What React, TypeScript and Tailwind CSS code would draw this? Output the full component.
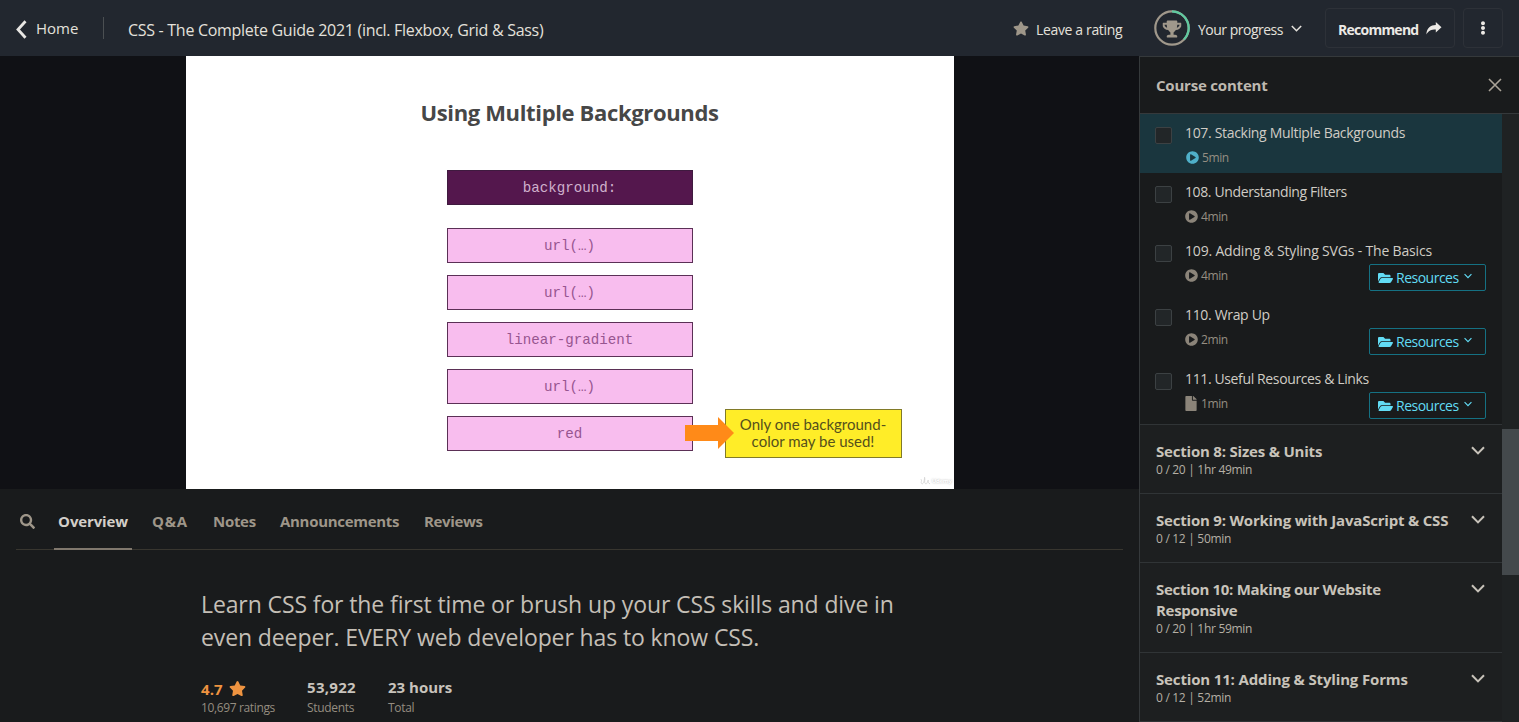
import React from "react";
import { FaStar, FaTrophy, FaEllipsisV, FaFolderOpen, FaFile, FaPlayCircle, FaSearch } from "react-icons/fa";

type Lecture = { title: string; time: string; track: string; active?: boolean; file?: boolean; resources?: boolean };

const lectures: Lecture[] = [
  { title: "107. Stacking Multiple Backgrounds", time: "5min", track: "tracking-[-0.32px]", active: true },
  { title: "108. Understanding Filters", time: "4min", track: "tracking-[-0.38px]" },
  { title: "109. Adding & Styling SVGs - The Basics", time: "4min", track: "tracking-[-0.18px]", resources: true },
  { title: "110. Wrap Up", time: "2min", track: "tracking-[-0.33px]", resources: true },
  { title: "111. Useful Resources & Links", time: "1min", track: "tracking-[-0.37px]", file: true, resources: true },
];

const sections = [
  { title: "Section 8: Sizes & Units", info: "0 / 20 | 1hr 49min", box: "h-[69px]", track: "tracking-[-0.2px]" },
  { title: "Section 9: Working with JavaScript & CSS", info: "0 / 12 | 50min", box: "h-[69px]", track: "tracking-[-0.2px]" },
  { title: "Section 10: Making our Website Responsive", info: "0 / 20 | 1hr 59min", box: "h-[90px]", track: "tracking-[-0.3px]" },
  { title: "Section 11: Adding & Styling Forms", info: "0 / 12 | 52min", box: "h-[69px]", track: "tracking-[-0.15px]" },
];

const layers = ["url(…)", "url(…)", "linear-gradient", "url(…)", "red"];

function Chevron({ className }: { className: string }) {
  return (
    <svg viewBox="0 0 14 9" className={className} fill="none" stroke="currentColor" strokeWidth="2">
      <path d="M1 1.2 7 7.4 13 1.2" />
    </svg>
  );
}

function Header() {
  return (
    <header className="flex h-14 shrink-0 items-center bg-[#22272f] text-[14px] text-[#e4e1dc]">
      <svg viewBox="0 0 11 19" className="ml-4 mt-[2px] h-[19px] w-[11px]" fill="none" stroke="#e8e6e3" strokeWidth="2.8">
        <path d="M9.5 1.2 2 9.5l7.500 8.300" />
      </svg>
      <span className="ml-[9px] w-[67px] pt-px text-[15px]">Home</span>
      <span className="h-[22px] w-px bg-[#4b4f52]" />
      <span className="ml-6 mt-1 whitespace-nowrap text-[16px] tracking-[-0.29px]">CSS - The Complete Guide 2021 (incl. Flexbox, Grid &amp; Sass)</span>
      <div className="ml-auto flex items-center whitespace-nowrap">
        <FaStar className="h-[15px] w-[16px] text-[#9e9689]" />
        <span className="ml-[7px] w-[118px] pt-[2px] tracking-[-0.35px]">Leave a rating</span>
        <svg viewBox="0 0 36 36" className="h-9 w-9" fill="none" strokeWidth="2.2">
          <circle cx="18" cy="18" r="16.7" stroke="#a0988b" />
          <path d="M18 1.3A16.7 16.7 0 0 1 30 29.6" stroke="#5fc9a0" />
          <FaTrophy x="8.5" y="9.500" size={19} color="#a0988b" strokeWidth="0" />
        </svg>
        <span className="ml-2 w-[93px] pt-[2px] tracking-[-0.5px]">Your progress</span>
        <Chevron className="h-[7px] w-[11px]" />
        <div className="ml-[23px] flex h-10 w-[130px] items-center rounded border border-[#2d3138] pl-3 font-bold text-[#ece9e5]">
          <span className="w-[88px] pt-[2px] tracking-[-0.75px]">Recommend</span>
          <svg viewBox="0 0 16 13" className="h-[13px] w-4" fill="currentColor">
            <path d="M15.500 5.200 9.800 0v3C4.500 3.100 1 5.500.300 12.500 2.400 8.800 5.200 7.500 9.800 7.500v3.100z" />
          </svg>
        </div>
        <div className="ml-2 mr-4 flex h-10 w-10 items-center justify-center rounded border border-[#2d3138]">
          <FaEllipsisV className="h-[14px] w-[14px] text-[#ece9e5]" />
        </div>
      </div>
    </header>
  );
}

function Slide() {
  return (
    <div className="flex h-[433px] justify-center bg-[#101115]">
      <div className="relative h-[433px] w-[768px] bg-white">
        <h1 className="pt-[40px] text-center text-[22px] font-bold leading-[32px] tracking-[-0.35px] text-[#474747]">Using Multiple Backgrounds</h1>
        <div className="mx-auto mt-[42px] w-[246px] text-center font-['Liberation_Mono',monospace] text-[14.2px]">
          <div className="h-[35px] border border-[#3f1a3f] bg-[#54174d] leading-[35px] text-[#cfb0cc]">background:</div>
          <div className="mt-[23px] flex flex-col gap-3">
            {layers.map((l, i) => (
              <div key={i} className="h-[35px] border border-[#5b3056] bg-[#f8bdee] leading-[35px] text-[#975590]">{l}</div>
            ))}
          </div>
        </div>
        <div className="absolute left-[539px] top-[353px] h-[49px] w-[177px] border border-[#817a28] bg-[#ffed28] pt-[6px] text-center font-['Lato',sans-serif] text-[15px] leading-[17px] text-[#55501c]">
          Only one background-<br />color may be used!
        </div>
        <svg viewBox="0 0 49 32" className="absolute left-[499px] top-[361px] h-8 w-[49px]">
          <path d="M0 8h33V0l16 16-16 16v-8H0z" fill="#ff8a18" />
        </svg>
        <div className="absolute bottom-[3px] right-[2px] flex items-center text-[6px] font-bold leading-none tracking-[-0.3px] text-white [text-shadow:0_0_2px_#aaa]">
          <svg viewBox="0 0 12 10" className="mr-px h-[10px] w-[11px]" fill="none" stroke="#cfcfcf" strokeWidth=".8">
            <path d="M1 3c2 1-1 4 1 5s3-5 3-7c1 2-1 6 1 7s2-3 3-4c0 2 0 4 2 4" />
          </svg>
          Udemy
        </div>
      </div>
    </div>
  );
}

function Tabs() {
  return (
    <nav className="mx-4 flex h-[61px] items-stretch border-b border-[#38362f] text-[15px] font-bold leading-[65px] text-[#9e9689]">
      <FaSearch className="ml-1 mt-[25px] h-[15px] w-[15px]" />
      <span className="-mb-px ml-[19px] w-[78px] border-b-2 border-[#80786d] text-center tracking-[-0.15px] text-[#d3cfc9]">Overview</span>
      <span className="ml-5 w-[61px] tracking-[0.8px]">Q&amp;A</span>
      <span className="w-[67px] tracking-[-0.3px]">Notes</span>
      <span className="w-[144px] tracking-[-0.3px]">Announcements</span>
      <span className="tracking-[-0.35px]">Reviews</span>
    </nav>
  );
}

function Overview() {
  return (
    <section className="ml-[201px] pt-[38px] text-[#c4bfb6]">
      <p className="whitespace-nowrap text-[23px] leading-[33px] tracking-[-0.11px]">
        Learn CSS for the first time or brush up your CSS skills and dive in<br />even deeper. EVERY web developer has to know CSS.
      </p>
      <div className="mt-[22px] flex text-[12px] leading-[18px] text-[#958d80]">
        <div className="w-[106px]">
          <div className="flex h-[23px] items-center text-[15px] font-bold text-[#ee9340]">
            <span className="mt-[2px] w-[28px] tracking-[0.1px]">4.7</span>
            <FaStar className="mt-px h-[17px] w-[17px]" />
          </div>
          <span className="tracking-[-0.36px]">10,697 ratings</span>
        </div>
        <div className="w-[81px]">
          <div className="h-[23px] text-[15px] font-bold leading-[22px] tracking-[0.3px] text-[#c8c3bc]">53,922</div>
          <span className="tracking-[-0.3px]">Students</span>
        </div>
        <div>
          <div className="h-[23px] text-[15px] font-bold leading-[22px] text-[#c8c3bc]">23 hours</div>
          <span className="tracking-[-0.3px]">Total</span>
        </div>
      </div>
    </section>
  );
}

function LectureRow({ l }: { l: Lecture }) {
  return (
    <div className={`flex shrink-0 pl-[15px] pr-4 pt-2 ${l.resources ? "h-16" : "h-[59px]"} ${l.active ? "bg-[#1a363e]" : ""}`}>
      <span className="mt-[5px] h-[17px] w-[17px] shrink-0 rounded-[2px] border border-[#3c4143] bg-[#222628]" />
      <div className="ml-[13px] flex-1">
        <div className={`whitespace-nowrap text-[14px] leading-[21px] text-[#d0ccc5] ${l.track}`}>{l.title}</div>
        <div className="mt-[3px] flex items-start justify-between">
          <div className={`flex h-[22px] items-center text-[12px] tracking-[-0.4px] text-[#958e82] ${l.active ? "pl-px" : ""}`}>
            {l.file ? <FaFile className="mr-1 h-[15px] w-[12px] text-[#8b8479]" /> : <FaPlayCircle className={`mr-[3px] h-[13px] w-[13px] ${l.active ? "text-[#4fb0c9]" : "text-[#8b8479]"}`} />}
            <span className="pt-[2px]">{l.time}</span>
          </div>
          {l.resources && (
            <div className="flex h-[27px] w-[117px] items-center rounded-[2px] border border-[#157183] pl-2 text-[14px] text-[#62dcf5]">
              <FaFolderOpen className="h-[14px] w-[15px]" />
              <span className="ml-[3px] w-[68px] tracking-[-0.5px]">Resources</span>
              <Chevron className="-mt-1 h-[6px] w-[8px]" />
            </div>
          )}
        </div>
      </div>
    </div>
  );
}

function Sidebar() {
  return (
    <aside className="flex w-[380px] shrink-0 flex-col border-l border-t border-[#35393b] bg-[#191b1c]">
      <div className="flex h-[57px] shrink-0 items-center justify-between border-b border-[#35393b] pl-4 pr-[17px] text-[15px] font-bold text-[#beb9b0]">
        <span className="pt-px tracking-[-0.2px]">Course content</span>
        <svg viewBox="0 0 14 14" className="h-[14px] w-[14px]" fill="none" stroke="#aaa397" strokeWidth="1.6">
          <path d="m1 1 12 12M13 1 1 13" />
        </svg>
      </div>
      <div className="flex min-h-0 flex-1">
        <div className="flex w-[362px] flex-col overflow-hidden">
          {lectures.map((l) => <LectureRow key={l.title} l={l} />)}
          {sections.map((s) => (
            <div key={s.title} className={`flex shrink-0 justify-between border-t border-[#303436] bg-[#1d1f20] pl-4 pr-[17px] pt-4 ${s.box}`}>
              <div className="w-[300px]">
                <div className={`text-[15px] font-bold leading-[21px] text-[#c8c3ba] ${s.track}`}>{s.title}</div>
                <div className="text-[12px] leading-[15px] tracking-[-0.3px] text-[#b5afa5]">{s.info}</div>
              </div>
              <Chevron className="mt-[5px] h-[9px] w-[14px] text-[#c8c3ba]" />
            </div>
          ))}
          <div className="h-px shrink-0 bg-[#303436]" />
        </div>
        <div className="w-[17px] bg-[#1f2223] pt-[315px]">
          <div className="h-[146px] bg-[#44494c]" />
        </div>
      </div>
    </aside>
  );
}

export default function App() {
  return (
    <div className="flex h-[722px] w-[1519px] flex-col overflow-hidden bg-[#191b1c] font-['Open_Sans','Noto_Sans',sans-serif]">
      <Header />
      <div className="flex min-h-0 flex-1">
        <main className="w-[1139px] shrink-0">
          <Slide />
          <Tabs />
          <Overview />
        </main>
        <Sidebar />
      </div>
    </div>
  );
}
